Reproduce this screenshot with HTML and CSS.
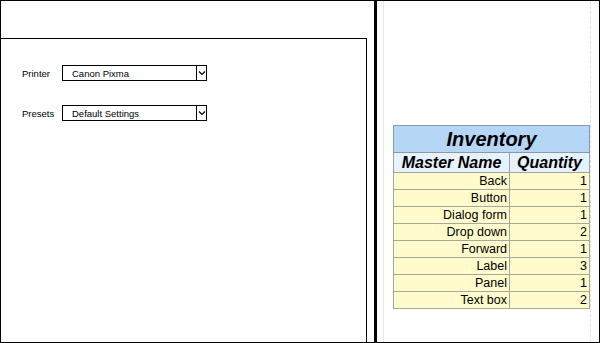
FILE: index.html
```html
<!DOCTYPE html>
<html lang="en">
<head>
    <meta charset="UTF-8">
    <meta name="viewport" content="width=device-width, initial-scale=1.0">
    <title>Print Settings - Inventory</title>
    <link rel="stylesheet" href="styles.css">
</head>
<body>
    <div class="frame">
        <div class="left-pane">
            <div class="panel">
                <div class="form-row">
                    <label class="form-label">Printer</label>
                    <div class="select-box">
                        <span class="select-value">Canon Pixma</span>
                        <span class="select-arrow">
                            <svg width="8" height="6" viewBox="0 0 8 6"><path d="M1 1.5 L4 4.5 L7 1.5" fill="none" stroke="#000" stroke-width="1.2"/></svg>
                        </span>
                    </div>
                </div>
                <div class="form-row">
                    <label class="form-label">Presets</label>
                    <div class="select-box">
                        <span class="select-value">Default Settings</span>
                        <span class="select-arrow">
                            <svg width="8" height="6" viewBox="0 0 8 6"><path d="M1 1.5 L4 4.5 L7 1.5" fill="none" stroke="#000" stroke-width="1.2"/></svg>
                        </span>
                    </div>
                </div>
            </div>
        </div>

        <div class="divider"></div>

        <div class="right-pane">
            <div class="sheet">
                <table class="inventory">
                    <tr>
                        <th class="title" colspan="2">Inventory</th>
                    </tr>
                    <tr>
                        <th class="col-head name-col">Master Name</th>
                        <th class="col-head qty-col">Quantity</th>
                    </tr>
                    <tr><td>Back</td><td>1</td></tr>
                    <tr><td>Button</td><td>1</td></tr>
                    <tr><td>Dialog form</td><td>1</td></tr>
                    <tr><td>Drop down</td><td>2</td></tr>
                    <tr><td>Forward</td><td>1</td></tr>
                    <tr><td>Label</td><td>3</td></tr>
                    <tr><td>Panel</td><td>1</td></tr>
                    <tr><td>Text box</td><td>2</td></tr>
                </table>
            </div>
        </div>
    </div>
</body>
</html>
```

FILE: styles.css
```css
/* Reset some default browser styles */
* {
    margin: 0;
    padding: 0;
    box-sizing: border-box;
}

body {
    font-family: "Liberation Sans", Arial, sans-serif;
    background-color: #fff;
}

.frame {
    width: 600px;
    height: 343px;
    border: 1px solid #000;
    display: flex;
}

/* Left side: print options */
.left-pane {
    width: 373px;
    display: flex;
    flex-direction: column;
}

.panel {
    width: 366px;
    flex: 1;
    margin-top: 37px;
    border-top: 1px solid #000;
    border-right: 1px solid #000;
    padding: 26px 0 0 21px;
    display: flex;
    flex-direction: column;
    gap: 24px;
}

.form-row {
    display: flex;
    align-items: center;
    height: 16px;
}

.form-label {
    width: 40px;
    font-size: 9.5px;
    color: #000;
}

.select-box {
    width: 145px;
    height: 16px;
    border: 1px solid #000;
    display: flex;
    align-items: center;
}

.select-value {
    flex: 1;
    font-size: 9.5px;
    padding-left: 9px;
}

.select-arrow {
    width: 10px;
    height: 100%;
    border-left: 1px solid #000;
    display: flex;
    align-items: center;
    justify-content: center;
}

.divider {
    width: 3px;
    background-color: #000;
}

/* Right side: inventory sheet */
.right-pane {
    flex: 1;
    padding-left: 6px;
}

.sheet {
    width: 208px;
    height: 100%;
    border-left: 1px solid #e6e6e6;
    border-right: 1px dashed #e0e0e0;
    padding: 124px 0 0 9px;
}

.inventory {
    width: 197px;
    border-collapse: collapse;
    border: 1px solid #333;
}

.inventory th,
.inventory td {
    border: 1px solid #a8a898;
}

.inventory .title {
    height: 27px;
    background-color: #b6d6f6;
    font-size: 20px;
    font-weight: bold;
    font-style: italic;
    text-align: center;
    border-color: #8a9aa8;
}

.inventory .col-head {
    height: 20px;
    background-color: #e6f2fc;
    font-size: 16px;
    font-weight: bold;
    font-style: italic;
    text-align: center;
    border-color: #9aa4ac;
}

.name-col {
    width: 116px;
}

.inventory td {
    height: 17px;
    background-color: #fffbcc;
    font-size: 12.5px;
    text-align: right;
    padding: 1px 2px 0 0;
    line-height: 15px;
}
```
